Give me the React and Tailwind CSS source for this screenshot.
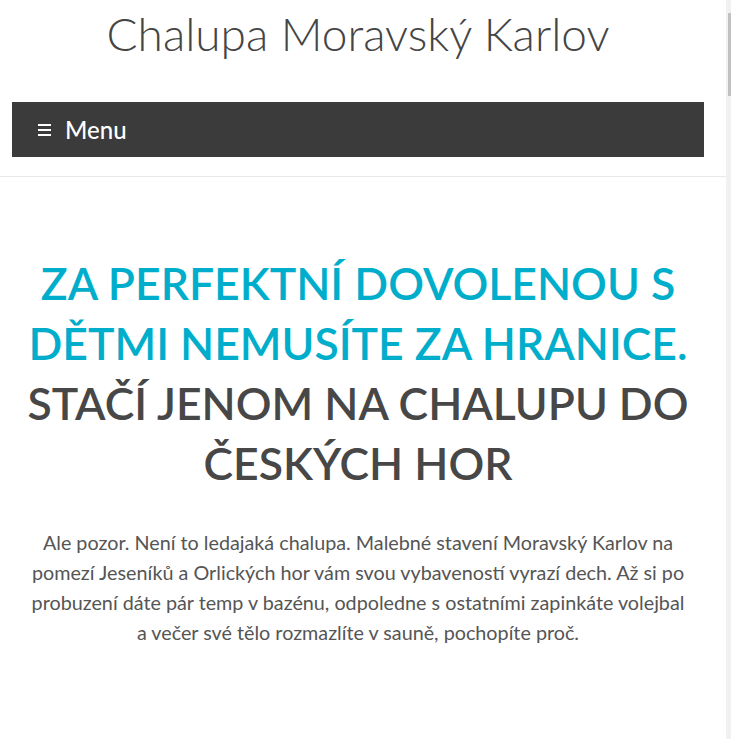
export default function App() {
  return (
    <div className="relative">
      <div
        className="h-[739px] w-full overflow-y-scroll border-r-[5px] border-[#f1f1f1] bg-white [&::-webkit-scrollbar]:w-0"
        style={{ fontFamily: "Lato, 'Open Sans', sans-serif" }}
      >
        <header className="border-b border-[#e8e8e8] bg-white">
          <div className="w-[716px] pb-[19px]">
            <div className="pt-[6px] text-center text-[46px] leading-[56px] font-light text-[#454545]">
              Chalupa Moravský Karlov
            </div>
            <div className="mx-[12px] mt-[40px] flex h-[55px] items-center bg-[#3b3b3b] pl-[26px]">
              <span className="flex w-[13px] flex-col gap-[3px]">
                <span className="h-[2px] w-[13px] bg-white" />
                <span className="h-[2px] w-[13px] bg-white" />
                <span className="h-[2px] w-[13px] bg-white" />
              </span>
              <span className="ml-[14px] text-[24px] leading-none font-medium text-white">Menu</span>
            </div>
          </div>
        </header>
        <main className="min-h-[6200px]">
          <div className="w-[716px] px-[10px] pt-[76px] text-center">
            <h1 className="text-[44.5px] leading-[60px] font-semibold uppercase">
              <span className="text-[#00aecb]">
                Za perfektní dovolenou s
                <br />
                dětmi nemusíte za hranice.
              </span>
              <br />
              <span className="text-[#474747]">
                Stačí jenom na chalupu do
                <br />
                českých hor
              </span>
            </h1>
            <p className="mt-[35px] text-[19.75px] leading-[30px] text-[#555]">
              Ale pozor. Není to ledajaká chalupa. Malebné stavení Moravský Karlov na
              <br />
              pomezí Jeseníků a Orlických hor vám svou vybaveností vyrazí dech. Až si po
              <br />
              probuzení dáte pár temp v bazénu, odpoledne s ostatními zapinkáte volejbal
              <br />
              a večer své tělo rozmazlíte v sauně, pochopíte proč.
            </p>
          </div>
        </main>
      </div>
      <div className="absolute top-[13px] right-0 h-[83px] w-[3px] bg-[#c1c1c1]" />
    </div>
  );
}
